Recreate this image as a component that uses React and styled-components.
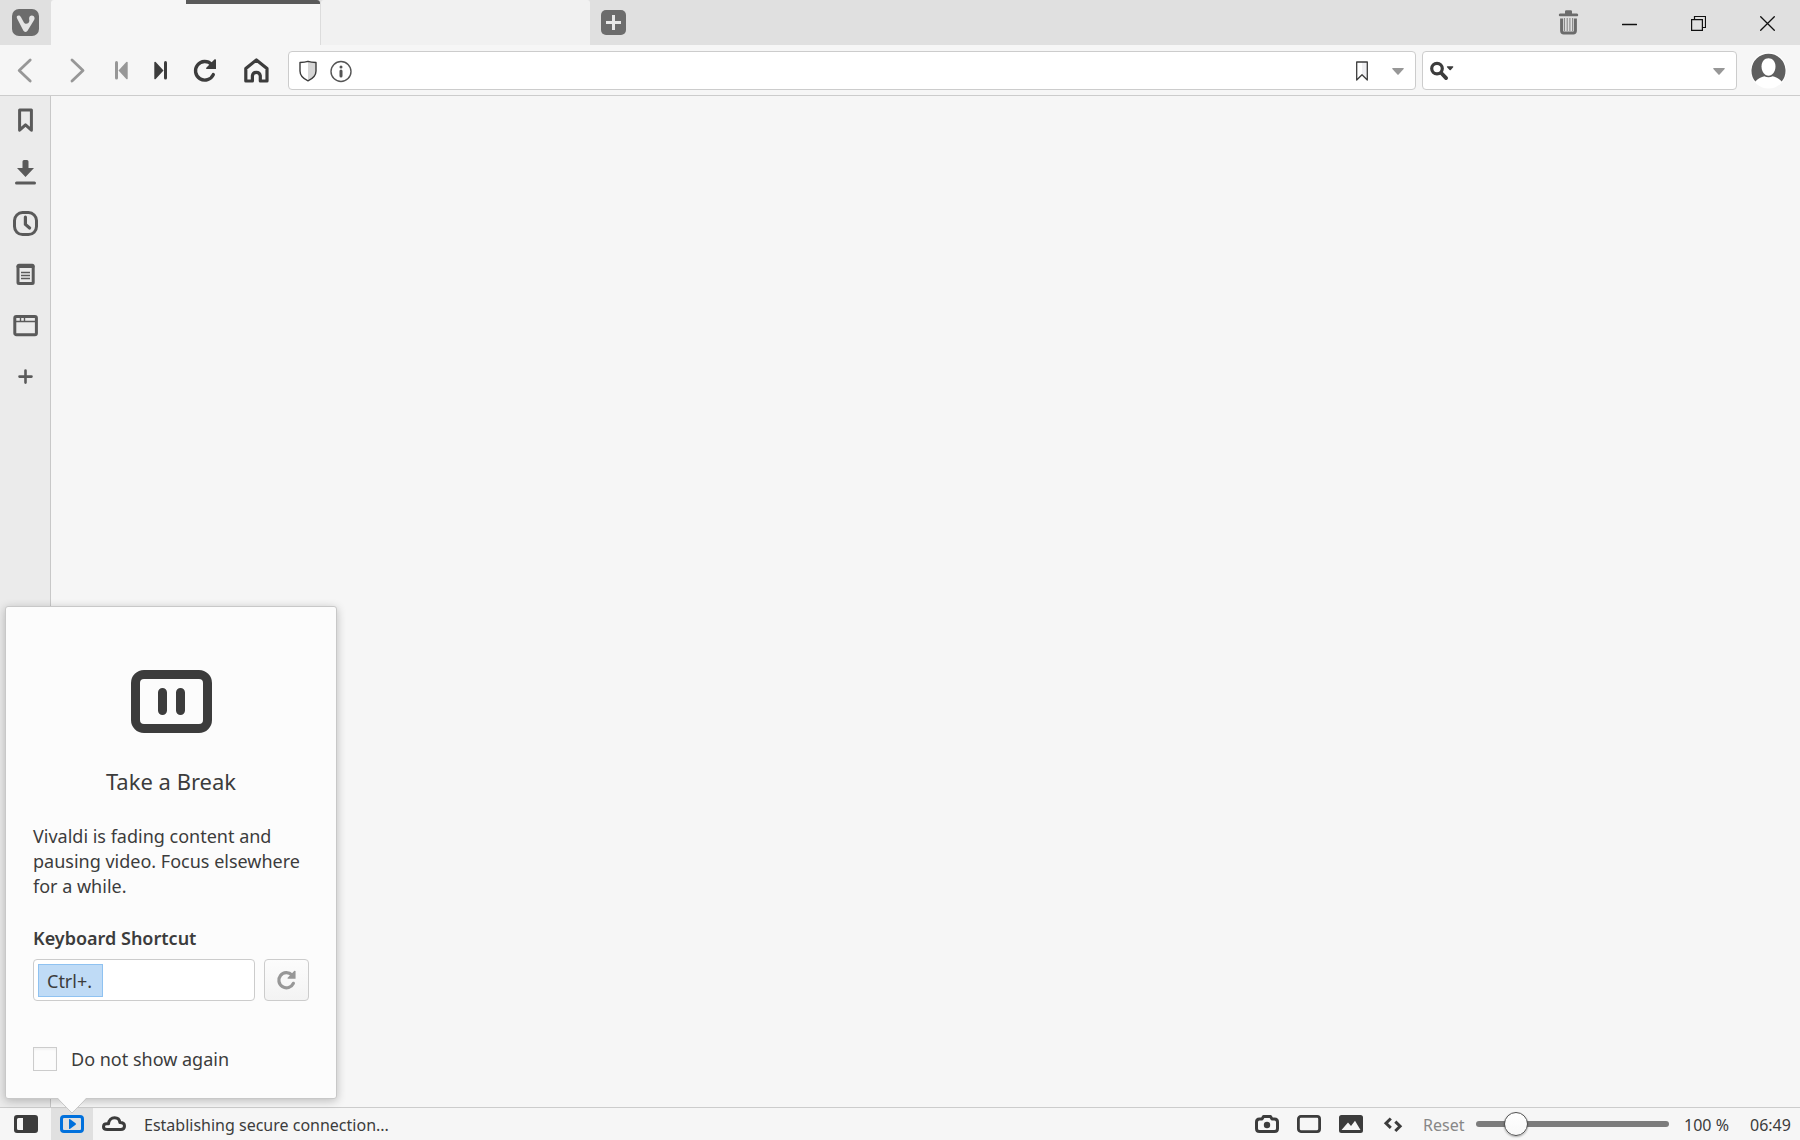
import React, { useState } from 'react';
import styled, { createGlobalStyle, css } from 'styled-components';

const GlobalStyle = createGlobalStyle`
  *, *::before, *::after { box-sizing: border-box; }
  body {
    margin: 0;
    background: #f6f6f6;
    color: #3c3c3c;
    font-family: "Noto Sans", "Open Sans", sans-serif;
    font-size: 18px;
  }
  button, input { font: inherit; color: inherit; }
  svg { display: block; flex: none; }
`;

const Window = styled.div`
  display: grid;
  grid-template-rows: auto auto 1fr auto;
  height: 100vh;
`;

const PlainButton = styled.button`
  display: flex;
  align-items: center;
  justify-content: center;
  flex: none;
  padding: 0;
  border: 0;
  background: none;
  cursor: pointer;
`;

/* Title bar */

const TitleBar = styled.header`
  display: flex;
  height: 45px;
  background: #e0e0e0;
`;

const MenuButton = styled(PlainButton)`
  width: 51px;
`;

const Tab = styled(PlainButton)`
  position: relative;
  width: ${(p) => (p.$active ? 270 : 269)}px;
  border-radius: 3px 3px 0 0;
  background: ${(p) => (p.$active ? '#f6f6f6' : '#f1f1f1')};
  ${(p) =>
    p.$active &&
    css`
      border-right: 1px solid #dcdcdc;
    `}
`;

const TabProgress = styled.span`
  position: absolute;
  top: 0;
  right: 0;
  width: 50%;
  height: 4px;
  border-radius: 0 3px 0 0;
  background: #5a5a5a;
`;

const NewTabButton = styled(PlainButton)`
  width: 47px;
`;

const WindowControls = styled.div`
  display: flex;
  gap: 24px;
  margin-left: auto;
  padding-right: 10px;
`;

const WindowButton = styled(PlainButton)`
  width: 45px;
  color: #111;
`;

const TrashButton = styled(WindowButton)`
  margin-right: -8px;
  color: #6c6c6c;
`;

/* Toolbar */

const Toolbar = styled.nav`
  display: flex;
  align-items: stretch;
  padding: 6px 0 5px;
  border-bottom: 1px solid #ccc;
  background: #f6f6f6;
`;

const NavButton = styled(PlainButton)`
  width: ${(p) => (p.$narrow ? 39 : 51)}px;
  color: ${(p) => (p.disabled ? '#979797' : '#3c3c3c')};
`;

const Field = styled.div`
  display: flex;
  align-items: center;
  height: 39px;
  margin-left: 6px;
  border: 1px solid #ccc;
  border-radius: 4px;
  background: #fff;
`;

const AddressField = styled(Field)`
  flex: 1;
  gap: 12px;
  padding: 0 11px 0 10px;
`;

const SearchField = styled(Field)`
  width: 315px;
  padding: 0 11px 0 7px;
`;

const FieldInput = styled.input`
  flex: 1;
  min-width: 0;
  border: 0;
  outline: 0;
  background: none;
`;

const FieldDropdown = styled(PlainButton)`
  margin-left: 12px;
`;

const ProfileButton = styled(PlainButton)`
  width: 63px;
`;

/* Body */

const Body = styled.div`
  display: flex;
  min-height: 0;
`;

const Sidebar = styled.aside`
  width: 51px;
  border-right: 1px solid #c8c8c8;
  background: #ebebeb;
`;

const PanelButton = styled(PlainButton)`
  width: 100%;
  height: 51px;
  color: #5a5a5a;
`;

const Page = styled.main`
  flex: 1;
  background: #f6f6f6;
`;

/* Status bar */

const StatusBar = styled.footer`
  display: flex;
  align-items: stretch;
  height: 33px;
  padding: 0 9px 0 5px;
  border-top: 1px solid #ccc;
  background: #f6f6f6;
  font-size: 16px;
  line-height: 34px;
`;

const StatusButton = styled(PlainButton)`
  width: 42px;
  height: 100%;
  color: ${(p) => (p.$active ? '#0070dc' : '#3c3c3c')};
  background: ${(p) => (p.$active ? '#e0e0e0' : 'none')};
`;

const BreakAnchor = styled.div`
  position: relative;
  margin-left: 4px;
`;

const StatusText = styled.output`
  flex: 1;
  padding-left: 9px;
`;

const ResetButton = styled(PlainButton)`
  align-items: flex-start;
  justify-content: flex-start;
  width: 53px;
  margin-left: 9px;
  color: #878787;
`;

const ZoomSlider = styled.input`
  appearance: none;
  width: 193px;
  height: 24px;
  margin: 4px 15px 0 0;
  background: none;

  &::-webkit-slider-runnable-track {
    height: 6px;
    border-radius: 3px;
    background: #7c7c7c;
  }
  &::-webkit-slider-thumb {
    appearance: none;
    width: 24px;
    height: 24px;
    margin-top: -9px;
    border: 1px solid #505050;
    border-radius: 50%;
    background: linear-gradient(#fff, #f8f8f8);
    box-shadow: 0 1px 2px rgba(0, 0, 0, 0.3);
  }
`;

const ZoomValue = styled.output`
  width: 66px;
`;

const Clock = styled.time`
  width: 41px;
`;

/* Break popup */

const Popup = styled.section`
  position: absolute;
  left: -46px;
  bottom: 41px;
  display: flex;
  flex-direction: column;
  width: 332px;
  padding: 63px 27px 26px;
  border: 1px solid #c8c8c8;
  border-radius: 3px;
  background: #fcfcfc;
  box-shadow: 0 2px 10px rgba(0, 0, 0, 0.24);
  font-size: 18px;
  line-height: 25px;

  & > svg { align-self: center; }
`;

const PopupArrow = styled.svg`
  position: absolute;
  left: 51px;
  top: 100%;
`;

const PopupTitle = styled.h1`
  margin: 33px 0 28px;
  font-size: 22px;
  font-weight: 400;
  line-height: 30px;
  text-align: center;
`;

const PopupText = styled.p`
  margin: 0;
  white-space: nowrap;
`;

const ShortcutLabel = styled.label`
  margin: 27px 0 8px;
  font-weight: 600;
`;

const ShortcutRow = styled.div`
  display: flex;
  gap: 9px;
`;

const ShortcutBox = styled.div`
  flex: 1;
  height: 42px;
  padding: 4px;
  border: 1px solid #ccc;
  border-radius: 4px;
  background: #fff;
`;

const ShortcutInput = styled.input`
  display: block;
  width: 65px;
  height: 33px;
  padding: 0 8px;
  border: 1px solid #8fc2f1;
  outline: 0;
  background: #bfdbf6;
`;

const ShortcutReset = styled(PlainButton)`
  width: 45px;
  border: 1px solid #ccc;
  border-radius: 4px;
  background: linear-gradient(#fcfcfc, #f3f3f3);
  color: #979797;
`;

const CheckRow = styled.label`
  display: flex;
  align-items: flex-start;
  gap: 14px;
  margin-top: 46px;
`;

const Checkbox = styled.input`
  appearance: none;
  width: 24px;
  height: 24px;
  margin: 0;
  border: 1px solid #ccc;
  background: #fcfcfc;
  box-shadow: inset 0 2px 2px rgba(0, 0, 0, 0.04);

  &:checked { background: #0070dc; }
`;

/* Icons */

const Icon = ({ w = 27, h = 27, vw = w, vh = h, line = 3, children }) => (
  <svg
    width={w}
    height={h}
    viewBox={`0 0 ${vw} ${vh}`}
    fill="none"
    stroke="currentColor"
    strokeWidth={line}
    strokeLinecap="round"
    strokeLinejoin="round"
    aria-hidden="true"
  >
    {children}
  </svg>
);

const solid = { fill: 'currentColor', stroke: 'none' };

const VivaldiIcon = () => (
  <Icon>
    <rect width="27" height="27" rx="7" fill="#6c6c6c" stroke="none" />
    <path
      d="M5.1 9.4C4.2 7.9 5 6.6 6.7 6.6c1.1 0 1.7.6 2.2 1.5l3 5.3c1.2 2.100 4.6 1.700 5.300-.9.4-1.200-.1-1.700-.1-3.100 0-1.600 1.200-2.800 2.700-2.800 1.600 0 2.800 1.200 2.800 2.700 0 .6-.2 1.100-.5 1.600l-6.400 10.700c-.5.9-1.200 1.300-2.200 1.300s-1.700-.5-2.200-1.300z"
      fill="#e4e4e4"
      stroke="none"
    />
  </Icon>
);

const NewTabIcon = () => (
  <Icon w={25} h={25}>
    <rect width="25" height="25" rx="5" fill="#6c6c6c" stroke="none" />
    <path d="M5 12.500h15M12.500 5v15" stroke="#e8e8e8" strokeLinecap="butt" />
  </Icon>
);

const TrashIcon = () => (
  <Icon w={21} h={27}>
    <path {...solid} d="M7 4.500V2.500q0-1.200 1.200-1.200h4.600q1.200 0 1.200 1.200v2h5q1.200 0 1.200 1.500T19 7.300H2Q.8 7.300.8 6T2 4.500z" />
    <path d="M3.600 9.500v12.300q0 2.200 2.200 2.200h9.400q2.200 0 2.200-2.200V9.500" strokeLinecap="butt" />
    <path d="M6.500 9v13M9.200 9v13M11.900 9v13M14.600 9v13" strokeWidth="1.100" strokeLinecap="butt" opacity=".75" />
  </Icon>
);

const MinimizeIcon = () => (
  <Icon w={15} h={17} line={1.300}><path d="M.5 10.500h14" /></Icon>
);

const RestoreIcon = () => (
  <Icon w={15} h={17} line={1}>
    <path d="M.6 5.600h10.800v10.800H.6zM3.500 5.500v-3h11v11h-3" strokeWidth="1.200" strokeLinejoin="miter" />
  </Icon>
);

const CloseIcon = () => (
  <Icon w={15} h={17} line={1.300}><path d="M.7 2.700l13.600 13.600M14.300 2.700L.7 16.300" /></Icon>
);

const ReloadIcon = ({ size = 27, line = 3.400 }) => (
  <Icon w={size} h={size} vw={27} vh={27} line={line}>
    <path d="M19.500 7.300A9.300 9.300 0 1 0 21.300 17.600" />
    <path {...solid} d="M24 2.600V12H14.600q-1-.3-.3-1.200l8.300-8.600z" />
  </Icon>
);

const HomeIcon = () => (
  <Icon line={3.200}>
    <path d="M2.800 24V11.500L13.400 2.900 24 11.500V24h-6.700v-5.300a4 4 0 0 0-7.900 0V24z" />
  </Icon>
);

const ShieldIcon = () => (
  <Icon w={18} h={22} line={1.400}>
    <path d="M9 1.500l8 1V11c0 4.500-3.500 7.800-8 9.800z" fill="#d6d6d6" stroke="none" />
    <path d="M1 2.500Q6 2.300 9 1.300q3 1 8 1.200V11c0 4.500-3.500 7.800-8 9.800C4.500 18.800 1 15.500 1 11z" />
  </Icon>
);

const InfoIcon = () => (
  <Icon w={24} h={24} line={1.400}>
    <circle cx="12" cy="12.500" r="10" stroke="#555" />
    <circle cx="12" cy="8" r="1.500" fill="#555" stroke="none" />
    <path d="M12 12v5" stroke="#555" strokeWidth="3" />
  </Icon>
);

const FieldBookmarkIcon = () => (
  <Icon w={12} h={20} line={1.300}>
    <path d="M6 1h5.300v18L6 14z" fill="#efeff2" stroke="none" />
    <path d="M.7 1h10.600v18L6 13.800.7 19z" />
  </Icon>
);

const CaretIcon = () => (
  <Icon w={12} h={8} line={1}><path {...solid} fill="#979797" d="M.8 1h10.400q1 .3.400 1L6.600 7.500q-.6.6-1.200 0L.4 2Q-.2 1.300.8 1z" /></Icon>
);

const SearchIcon = () => (
  <Icon w={24} h={20} line={3.200}>
    <circle cx="7" cy="7.600" r="5.300" />
    <path d="M11.500 12.200l4.600 4.900" strokeWidth="3.800" />
    <path {...solid} d="M17.500 5.200h5.300q1 .3.400 1L20.800 9q-.6.500-1.200 0L17 6.200q-.5-.8.500-1z" />
  </Icon>
);

const ProfileIcon = () => (
  <Icon w={37} h={37}>
    <circle cx="18.500" cy="18.500" r="18" fill="#fff" stroke="none" />
    <path {...solid} fill="#5e5e5e" d="M5.300 29.500A17 17 0 1 1 31.700 29.500C29 26.500 25.500 25 22.700 24.300q-4.200 2-8.400 0C11.500 25 8 26.500 5.300 29.500z" />
    <path fill="#fff" stroke="none" d="M11.500 14.500c0-5 3-8.300 7-8.300s7 3.300 7 8.300-3 9.200-7 9.200-7-4.200-7-9.200z" />
  </Icon>
);

const panels = [
  ['Bookmarks', <path key="i" d="M7.600 22.200V1.900h11.800v20.300l-5.900-5.400z" />],
  ['Downloads', (
    <g key="i">
      <path {...solid} d="M10.500 9V2.500q0-1.500 1.500-1.500h3q1.500 0 1.500 1.500V9H22l-8.500 9L5 9z" />
      <path d="M4.500 24h18" />
    </g>
  )],
  ['History', (
    <g key="i">
      <rect x="2.500" y="2.600" width="22" height="22" rx="8" />
      <path d="M13.400 7.200v7.200l4.200 3.600" strokeWidth="3.200" />
    </g>
  )],
  ['Notes', (
    <g key="i">
      <rect x="6" y="4.300" width="15.200" height="18.200" rx="1" />
      <path d="M6 5.500h15" />
      <path d="M9 11.500h9M9 14.500h9M9 17.500h9" strokeWidth="1.300" strokeLinecap="butt" />
    </g>
  )],
  ['Window', (
    <g key="i">
      <rect x="2.800" y="4.500" width="21.600" height="18.200" rx="1.500" />
      <path d="M3 9.500h21M8.500 5v4M12.500 5v4" strokeWidth="1.400" />
    </g>
  )],
  ['Add web panel', <path key="i" d="M7.500 13.600h12M13.500 7.600v12" strokeWidth="2.600" />],
];

const ToggleIcon = () => (
  <Icon w={24} h={18}>
    <path {...solid} fillRule="evenodd" d="M3 0h18q3 0 3 3v12q0 3-3 3H3q-3 0-3-3V3q0-3 3-3zm1.500 3Q3 3 3 4.500v9Q3 15 4.500 15H9V3z" />
  </Icon>
);

const PlayIcon = () => (
  <Icon w={24} h={18}>
    <rect x="1.500" y="1.500" width="21" height="15" rx="2.500" />
    <path {...solid} d="M9 4.800q0-1.300 1.200-.6l5.400 4q.9.800 0 1.600l-5.400 4q-1.200.7-1.200-.6z" />
  </Icon>
);

const CloudIcon = () => (
  <Icon w={24} h={18} line={3}>
    <path d="M5.200 14.600C2.600 14.600 1.500 13.200 1.500 11.700c0-1.800 1.500-2.900 3.300-2.900h1.700C6.800 4.800 9.500 2.700 12.600 2.700c3 0 5 2 5.300 4.800 2.700 0 4.600 1.300 4.600 3.600 0 2.200-1.600 3.500-3.700 3.500z" />
  </Icon>
);

const CameraIcon = () => (
  <Icon w={24} h={18}>
    <path d="M4.500 4H7l1.500-2.500h7L17 4h2.500q3 0 3 3v6.500q0 3-3 3h-15q-3 0-3-3V7q0-3 3-3z" />
    <circle cx="12" cy="10" r="3.200" {...solid} />
  </Icon>
);

const TileIcon = () => (
  <Icon w={24} h={18}><rect x="1.400" y="1.400" width="21.200" height="15.200" rx="2.500" strokeWidth="2.800" /></Icon>
);

const ImageIcon = () => (
  <Icon w={24} h={18}>
    <path {...solid} fillRule="evenodd" d="M2.500 0h19Q24 0 24 2.500v13q0 2.500-2.500 2.500h-19Q0 18 0 15.500v-13Q0 0 2.500 0zM2.500 15h19l-5.500-9.200-4 5.200-3-3.500z" />
  </Icon>
);

const CodeIcon = () => (
  <Icon w={24} h={18}><path d="M9.800 3.500L5 8.300l4.800 4.500M14.300 6.600l4.800 4.700-4.800 4.700" strokeLinecap="butt" strokeLinejoin="miter" /></Icon>
);

const PauseIcon = () => (
  <Icon w={81} h={63} line={9}>
    <rect x="4.500" y="4.500" width="72" height="54" rx="8.500" />
    <path d="M31.500 22.500v18M49.500 22.500v18" />
  </Icon>
);

function BreakPopup() {
  return (
    <Popup aria-labelledby="break-title">
      <PauseIcon />
      <PopupTitle id="break-title">Take a Break</PopupTitle>
      <PopupText>
        Vivaldi is fading content and
        <br />
        pausing video. Focus elsewhere
        <br />
        for a while.
      </PopupText>
      <ShortcutLabel htmlFor="shortcut">Keyboard Shortcut</ShortcutLabel>
      <ShortcutRow>
        <ShortcutBox>
          <ShortcutInput id="shortcut" readOnly value="Ctrl+." />
        </ShortcutBox>
        <ShortcutReset aria-label="Reset shortcut"><ReloadIcon size={22} line={4} /></ShortcutReset>
      </ShortcutRow>
      <CheckRow>
        <Checkbox type="checkbox" />
        Do not show again
      </CheckRow>
      <PopupArrow width="30" height="16" viewBox="0 0 30 16" aria-hidden="true">
        <path d="M0-1L15 15 30-1z" fill="#fcfcfc" />
        <path d="M0 0l15 15L30 0" fill="none" stroke="#c8c8c8" />
      </PopupArrow>
    </Popup>
  );
}

export default function App() {
  const [zoom, setZoom] = useState(100);
  return (
    <>
      <GlobalStyle />
      <Window>
        <TitleBar>
          <MenuButton aria-label="Menu"><VivaldiIcon /></MenuButton>
          <Tab $active aria-label="Tab 1"><TabProgress /></Tab>
          <Tab aria-label="Tab 2" />
          <NewTabButton aria-label="New tab"><NewTabIcon /></NewTabButton>
          <WindowControls>
            <TrashButton aria-label="Closed tabs"><TrashIcon /></TrashButton>
            <WindowButton aria-label="Minimize"><MinimizeIcon /></WindowButton>
            <WindowButton aria-label="Restore"><RestoreIcon /></WindowButton>
            <WindowButton aria-label="Close"><CloseIcon /></WindowButton>
          </WindowControls>
        </TitleBar>

        <Toolbar>
          <NavButton disabled aria-label="Back"><Icon line={2.800}><path d="M18.200 3L7.200 13.500 18.200 24" /></Icon></NavButton>
          <NavButton disabled aria-label="Forward"><Icon line={2.800}><path d="M9 3l11 10.500L9 24" /></Icon></NavButton>
          <NavButton $narrow disabled aria-label="Rewind">
            <Icon w={13}>
              <path d="M1.500 5.500v15.500" />
              <path {...solid} d="M12.700 5.300v16.400q-.5 1-1.400.3L3.500 13.500 11.300 5q.9-.7 1.400.3z" />
            </Icon>
          </NavButton>
          <NavButton $narrow aria-label="Fast forward">
            <Icon w={13}>
              <path d="M11.500 5.500v15.500" />
              <path {...solid} d="M.3 5.300v16.400q.5 1 1.400.3l7.800-8.500L1.700 5q-.9-.7-1.400.3z" />
            </Icon>
          </NavButton>
          <NavButton aria-label="Reload"><ReloadIcon /></NavButton>
          <NavButton aria-label="Home"><HomeIcon /></NavButton>
          <AddressField>
            <PlainButton aria-label="Content blocker"><ShieldIcon /></PlainButton>
            <PlainButton aria-label="Site info"><InfoIcon /></PlainButton>
            <FieldInput aria-label="Address" />
            <PlainButton aria-label="Bookmark page"><FieldBookmarkIcon /></PlainButton>
            <FieldDropdown aria-label="Address history"><CaretIcon /></FieldDropdown>
          </AddressField>
          <SearchField>
            <PlainButton aria-label="Search engine"><SearchIcon /></PlainButton>
            <FieldInput aria-label="Search" />
            <FieldDropdown aria-label="Search history"><CaretIcon /></FieldDropdown>
          </SearchField>
          <ProfileButton aria-label="Profile"><ProfileIcon /></ProfileButton>
        </Toolbar>

        <Body>
          <Sidebar>
            {panels.map(([name, shape]) => (
              <PanelButton key={name} aria-label={name}>
                <Icon w={26} h={27}>{shape}</Icon>
              </PanelButton>
            ))}
          </Sidebar>
          <Page />
        </Body>

        <StatusBar>
          <StatusButton aria-label="Toggle panel"><ToggleIcon /></StatusButton>
          <BreakAnchor>
            <StatusButton $active aria-label="Break mode"><PlayIcon /></StatusButton>
            <BreakPopup />
          </BreakAnchor>
          <StatusButton aria-label="Sync"><CloudIcon /></StatusButton>
          <StatusText>Establishing secure connection...</StatusText>
          <StatusButton aria-label="Capture page"><CameraIcon /></StatusButton>
          <StatusButton aria-label="Page tiling"><TileIcon /></StatusButton>
          <StatusButton aria-label="Toggle images"><ImageIcon /></StatusButton>
          <StatusButton aria-label="Page actions"><CodeIcon /></StatusButton>
          <ResetButton>Reset</ResetButton>
          <ZoomSlider
            type="range"
            aria-label="Zoom"
            min="20"
            max="500"
            value={zoom}
            onChange={(e) => setZoom(Number(e.target.value))}
          />
          <ZoomValue>{zoom} %</ZoomValue>
          <Clock>06:49</Clock>
        </StatusBar>
      </Window>
    </>
  );
}
